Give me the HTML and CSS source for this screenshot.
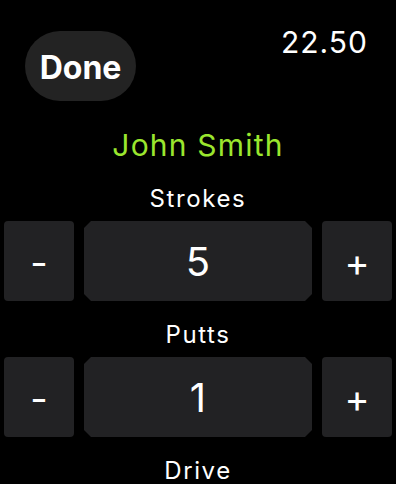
FILE: index.html
```html
<!DOCTYPE html>
<html lang="en">
<head>
    <meta charset="UTF-8">
    <meta name="viewport" content="width=device-width, initial-scale=1.0">
    <title>Scorecard</title>
    <link rel="stylesheet" href="styles.css">
</head>
<body>
    <div class="header">
        <button class="done">Done</button>
        <div class="clock">22.50</div>
    </div>

    <div class="player">John Smith</div>

    <div class="stat">
        <div class="stat-label">Strokes</div>
        <div class="stepper">
            <button class="step">-</button>
            <div class="value">5</div>
            <button class="step">+</button>
        </div>
    </div>

    <div class="stat">
        <div class="stat-label">Putts</div>
        <div class="stepper">
            <button class="step">-</button>
            <div class="value">1</div>
            <button class="step">+</button>
        </div>
    </div>

    <div class="stat">
        <div class="stat-label">Drive</div>
    </div>
</body>
</html>
```

FILE: styles.css
```css
body {
    font-family: Inter, "Noto Sans", sans-serif;
    background-color: #000;
    color: #fff;
    margin: 0;
    width: 396px;
    height: 484px;
    overflow: hidden;
}
.header {
    display: flex;
    justify-content: space-between;
    align-items: flex-start;
    padding: 0 28px 0 25px;
}
.done {
    margin-top: 31px;
    width: 111px;
    height: 70px;
    border: none;
    border-radius: 35px;
    background-color: #232323;
    color: #fff;
    font-family: inherit;
    font-size: 32px;
    font-weight: 700;
    padding: 2px 0 0 0;
}
.clock {
    margin-top: 24px;
    font-size: 30px;
    line-height: 36px;
    letter-spacing: 1px;
}
.player {
    margin-top: 26px;
    text-align: center;
    color: #9ae62e;
    font-size: 30px;
    line-height: 36px;
    letter-spacing: 1.2px;
}
.stat {
    text-align: center;
}
.stat-label {
    margin-top: 19px;
    font-size: 24px;
    line-height: 30px;
    letter-spacing: 1.6px;
}
.player + .stat .stat-label {
    margin-top: 21px;
}
.stepper {
    display: flex;
    gap: 10px;
    padding: 0 4px;
    margin-top: 7px;
    height: 80px;
}
.step {
    width: 70px;
    border: none;
    border-radius: 4px;
    background-color: #222224;
    color: #fff;
    font-family: inherit;
    font-size: 38px;
    padding: 2px 0 0 0;
}
.value {
    flex: 1;
    display: flex;
    align-items: center;
    justify-content: center;
    background-color: #222224;
    font-size: 40px;
    clip-path: polygon(7px 0, calc(100% - 7px) 0, 100% 7px, 100% calc(100% - 7px), calc(100% - 7px) 100%, 7px 100%, 0 calc(100% - 7px), 0 7px);
}
```
